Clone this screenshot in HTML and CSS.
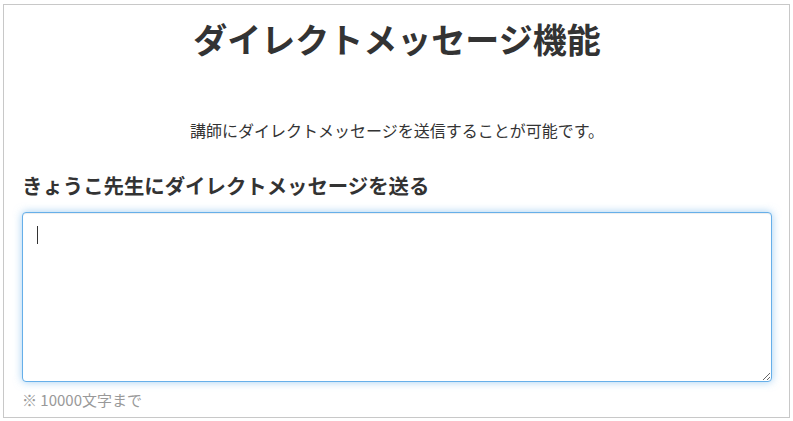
FILE: index.html
```html
<!DOCTYPE html>
<html lang="ja">
<head>
  <meta charset="utf-8">
  <title>ダイレクトメッセージ機能</title>
  <link rel="stylesheet" href="styles.css">
</head>
<body>
  <div class="panel">
    <h1>ダイレクトメッセージ機能</h1>

    <p class="lead">講師にダイレクトメッセージを送信することが可能です。</p>

    <div class="message-group">
      <label for="message">きょうこ先生にダイレクトメッセージを送る</label>
      <div class="field">
        <textarea id="message" autofocus></textarea>
        <span class="caret"></span>
      </div>
      <p class="note">※ 10000文字まで</p>
    </div>
  </div>
</body>
</html>
```

FILE: styles.css
```css
body {
  margin: 0;
  padding: 4px 3px 0;
  background-color: #ffffff;
  font-family: "Noto Sans CJK JP", "Noto Sans", sans-serif;
  color: #333333;
}

.panel {
  border: 1px solid #c8c8c8;
  padding: 0 17px 0 18px;
  height: 414px;
  box-sizing: border-box;
}

h1 {
  margin: 14px 0 0;
  font-size: 34px;
  line-height: 1.2;
  text-align: center;
  color: #333333;
}

.lead {
  margin: 58px 0 0;
  font-size: 16px;
  line-height: 1.5;
  text-align: center;
}

.message-group {
  margin-top: 29px;
}

.message-group label {
  display: block;
  font-size: 20.4px;
  font-weight: bold;
  line-height: 1.4;
  margin-bottom: 13px;
}

.field {
  position: relative;
}

.field textarea {
  display: block;
  width: 100%;
  height: 170px;
  box-sizing: border-box;
  padding: 12px 14px;
  border: 1px solid #66afe9;
  border-radius: 4px;
  outline: none;
  font-family: inherit;
  font-size: 16px;
  color: #333333;
  box-shadow: inset 0 1px 1px rgba(0, 0, 0, 0.075), 0 0 8px rgba(102, 175, 233, 0.6);
}

.caret {
  position: absolute;
  left: 15px;
  top: 14px;
  width: 1px;
  height: 18px;
  background-color: #333333;
}

.note {
  margin: 7px 0 0;
  font-size: 15px;
  color: #999999;
}
```
